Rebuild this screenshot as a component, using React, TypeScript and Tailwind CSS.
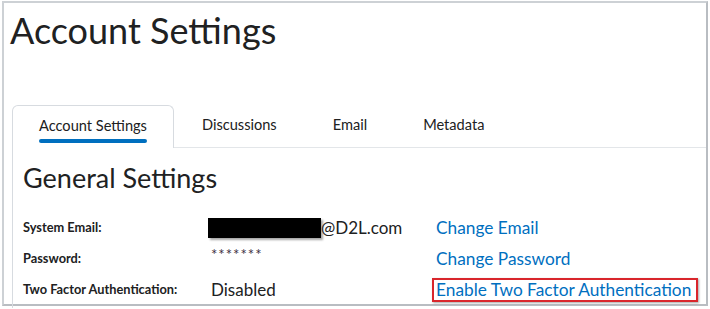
const font = { fontFamily: 'Lato, "Open Sans", sans-serif' };

const tabs = ['Account Settings', 'Discussions', 'Email', 'Metadata'];

function Tabs() {
  return (
    <div className="flex items-stretch">
      {tabs.map((tab, i) =>
        i === 0 ? (
          <div
            key={tab}
            className="relative flex h-[43px] items-center rounded-t-[6px] border border-b-0 border-[#d7dbe0] bg-white px-[26px] pb-[2px] text-[14.6px] text-[#202122]"
          >
            {tab}
            <span className="absolute bottom-[5px] left-[26px] right-[26px] h-[4px] rounded-full bg-[#006fbf]" />
          </div>
        ) : (
          <div key={tab} className="flex h-[43px] items-center border-b border-[#e3e6e9] px-[28px] pb-[2px] text-[14.6px] text-[#202122]">
            {tab}
          </div>
        ),
      )}
      <div className="flex-1 border-b border-[#e3e6e9]" />
    </div>
  );
}

function Row({ label, children, link, boxed }: { label: string; children: React.ReactNode; link: string; boxed?: boolean }) {
  return (
    <div className="grid h-[31px] grid-cols-[188px_225px_1fr] items-center">
      <span className="text-[12.8px] font-bold text-[#202122]">{label}</span>
      <div className="flex items-center">{children}</div>
      <div>
        <span
          className={
            boxed
              ? 'ml-[-4px] inline-block border-2 border-[#d9262c] pl-[2px] pr-[5px] leading-[20px] text-[17.3px] text-[#006fbf] shadow-[1px_1px_2px_rgba(0,0,0,0.35)]'
              : 'text-[17.3px] text-[#006fbf]'
          }
        >
          {link}
        </span>
      </div>
    </div>
  );
}

export default function App() {
  return (
    <div className="h-[309px] w-[710px] overflow-hidden bg-white" style={font}>
      <div className="ml-[2px] mt-[1px] h-[305px] w-[706px] border-2 border-[#cdd1d5] border-r-[#b9bdc2] border-b-[#b9bdc2]">
        <h1 className="pl-[6px] pt-[5px] text-[36px] font-normal leading-[44px] text-[#202122]">Account Settings</h1>

        <div className="ml-[8px] mt-[53px]">
          <Tabs />
          <div className="h-[160px] border-l border-[#d7dbe0] pl-[10px] pt-[14px]">
            <h2 className="text-[27px] leading-[32px] text-[#202122]">General Settings</h2>
            <div className="mt-[18px]">
              <Row label="System Email:" link="Change Email">
                <span className="ml-[-3px] inline-block h-[20px] w-[113px] bg-black shadow-[2px_2px_2px_rgba(0,0,0,0.35)]" />
                <span className="text-[17px] text-[#202122]">@D2L.com</span>
              </Row>
              <Row label="Password:" link="Change Password">
                <span className="mt-[-8px] text-[15px] tracking-[1px] text-[#3d2f40]">*******</span>
              </Row>
              <Row label="Two Factor Authentication:" link="Enable Two Factor Authentication" boxed>
                <span className="text-[17px] text-[#202122]">Disabled</span>
              </Row>
            </div>
          </div>
        </div>
      </div>
    </div>
  );
}
